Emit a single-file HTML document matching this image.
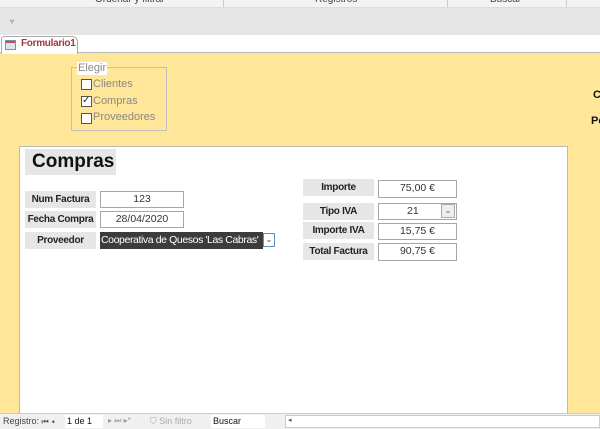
<!DOCTYPE html>
<html><head><meta charset="utf-8"><style>
*{margin:0;padding:0;box-sizing:border-box}
body{width:600px;height:429px;overflow:hidden;position:relative;font-family:"Liberation Sans",sans-serif;background:#ffe699}
.a{position:absolute}
.lbl{position:absolute;background:#e6e6e6;font-weight:bold;font-size:10px;letter-spacing:-0.3px;white-space:nowrap;color:#222;text-align:center;line-height:17px}
.box{position:absolute;background:#fff;border:1px solid #a6a6a6;font-size:10.5px;color:#333;text-align:center;line-height:15px}
.cb{position:absolute;width:11px;height:11px;border:1px solid #555;background:#fff}
.opt{position:absolute;font-size:11px;color:#888}
</style></head><body>
<div class="a" style="left:0;top:0;width:600px;height:8px;background:#f3f3f3;border-bottom:1px solid #ddd;overflow:hidden">
 <div class="a" style="left:95px;top:-6px;font-size:10px;color:#444">Ordenar y filtrar</div>
 <div class="a" style="left:315px;top:-6px;font-size:10px;color:#444">Registros</div>
 <div class="a" style="left:490px;top:-6px;font-size:10px;color:#444">Buscar</div>
 <div class="a" style="left:223px;top:0;width:1px;height:8px;background:#ccc"></div>
 <div class="a" style="left:447px;top:0;width:1px;height:8px;background:#ccc"></div>
 <div class="a" style="left:566px;top:0;width:1px;height:8px;background:#ccc"></div>
</div>
<div class="a" style="left:0;top:8px;width:600px;height:27px;background:#e6e6e6"></div>
<div class="a" style="left:10px;top:17px;font-size:8px;color:#666">▿</div>
<div class="a" style="left:0;top:35px;width:600px;height:18px;background:#fff;border-bottom:1px solid #bbb"></div>
<div class="a" style="left:1px;top:36px;width:77px;height:18px;background:#fff;border:1px solid #aaa;border-bottom:none;border-radius:3px 6px 0 0"></div>
<div class="a" style="left:5px;top:40px;width:11px;height:10px;border:1px solid #7a8fb5;background:#dde4f0"><div class="a" style="left:0;top:0;width:9px;height:2px;background:#c0504d"></div></div>
<div class="a" style="left:21px;top:38px;font-size:10px;font-weight:bold;color:#a4373a;letter-spacing:-0.3px">Formulario1</div>
<div class="a" style="left:71px;top:67px;width:96px;height:64px;border:1px solid #bfbfbf"></div>
<div class="a" style="left:77px;top:62px;background:#fff;font-size:11px;color:#888;padding:0 1px;line-height:13px">Elegir</div>
<div class="cb" style="left:81px;top:79px"></div><div class="opt" style="left:93px;top:78px">Clientes</div>
<div class="cb" style="left:81px;top:96px"></div><div class="a" style="left:82px;top:95px;font-size:10px;line-height:11px;color:#333">✓</div><div class="opt" style="left:93px;top:95px">Compras</div>
<div class="cb" style="left:81px;top:113px"></div><div class="opt" style="left:93px;top:111px">Proveedores</div>
<div class="a" style="left:593px;top:89px;font-size:11px;font-weight:bold;color:#111">C</div>
<div class="a" style="left:591px;top:115px;font-size:11px;font-weight:bold;color:#111">Po</div>
<div class="a" style="left:19px;top:146px;width:549px;height:268px;background:#fff;border:1px solid #bbb"></div>
<div class="lbl" style="left:25px;top:149px;width:91px;height:26px;font-size:19px;letter-spacing:0;line-height:26px;text-align:left;padding-left:7px;color:#111">Compras</div>
<div class="lbl" style="left:25px;top:191px;width:71px">Num Factura</div>
<div class="box" style="left:100px;top:191px;width:84px;height:17px">123</div>
<div class="lbl" style="left:25px;top:211px;width:71px">Fecha Compra</div>
<div class="box" style="left:100px;top:211px;width:84px;height:17px">28/04/2020</div>
<div class="lbl" style="left:25px;top:232px;width:71px">Proveedor</div>
<div class="a" style="left:100px;top:232px;width:163px;height:17px;background:#3c3c3c;color:#fff;font-size:10.5px;letter-spacing:-0.4px;line-height:17px;white-space:nowrap;overflow:hidden;padding-left:1px">Cooperativa de Quesos 'Las Cabras'</div>
<div class="a" style="left:263px;top:233px;width:12px;height:14px;border:1px solid #5b8fcf;background:#fff;font-size:8px;text-align:center;line-height:12px;color:#444">⌄</div>
<div class="lbl" style="left:303px;top:179px;width:71px">Importe</div>
<div class="box" style="left:378px;top:180px;width:79px;height:18px">75,00 €</div>
<div class="lbl" style="left:303px;top:203px;width:71px">Tipo IVA</div>
<div class="box" style="left:378px;top:203px;width:79px;height:17px;text-align:left;padding-left:28px">21</div>
<div class="a" style="left:441px;top:204px;width:14px;height:14px;border:1px solid #aaa;background:#eee;font-size:8px;text-align:center;line-height:12px;color:#555">⌄</div>
<div class="lbl" style="left:303px;top:222px;width:71px">Importe IVA</div>
<div class="box" style="left:378px;top:223px;width:79px;height:17px">15,75 €</div>
<div class="lbl" style="left:303px;top:243px;width:71px">Total Factura</div>
<div class="box" style="left:378px;top:243px;width:79px;height:18px">90,75 €</div>
<div class="a" style="left:0;top:413px;width:600px;height:16px;background:#f0f0f0;border-top:1px solid #ccc"></div>
<div class="a" style="left:3px;top:416px;font-size:9px;color:#444">Registro: <span style="font-size:8px">⏮ ◂</span></div>
<div class="a" style="left:65px;top:415px;width:38px;height:13px;background:#fff;font-size:9px;line-height:13px;padding-left:2px;color:#111">1 de 1</div>
<div class="a" style="left:108px;top:416px;font-size:8px;color:#999">▸ ⏭ ▸*</div>
<div class="a" style="left:150px;top:416px;font-size:9px;color:#aaa">⛉ Sin filtro</div>
<div class="a" style="left:211px;top:415px;width:54px;height:13px;background:#fff;font-size:9px;line-height:13px;padding-left:2px;color:#111">Buscar</div>
<div class="a" style="left:285px;top:415px;width:315px;height:13px;background:#fff;border:1px solid #ccc;font-size:7px;color:#555;padding-left:2px">◂</div>
</body></html>
